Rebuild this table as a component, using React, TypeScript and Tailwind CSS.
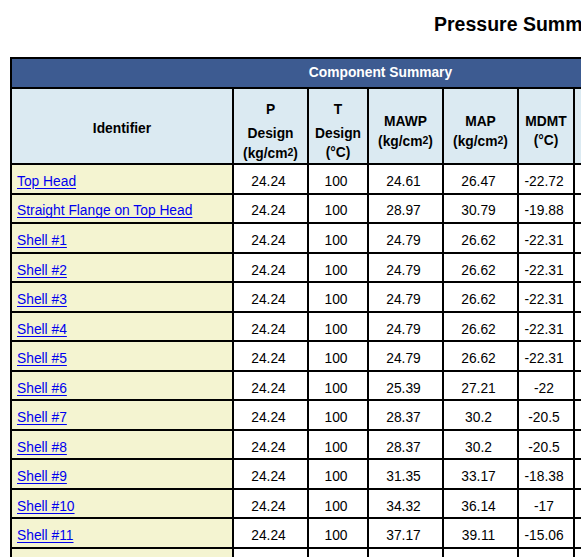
const rows = [
  ["Top Head", "24.24", "100", "24.61", "26.47", "-22.72"],
  ["Straight Flange on Top Head", "24.24", "100", "28.97", "30.79", "-19.88"],
  ["Shell #1", "24.24", "100", "24.79", "26.62", "-22.31"],
  ["Shell #2", "24.24", "100", "24.79", "26.62", "-22.31"],
  ["Shell #3", "24.24", "100", "24.79", "26.62", "-22.31"],
  ["Shell #4", "24.24", "100", "24.79", "26.62", "-22.31"],
  ["Shell #5", "24.24", "100", "24.79", "26.62", "-22.31"],
  ["Shell #6", "24.24", "100", "25.39", "27.21", "-22"],
  ["Shell #7", "24.24", "100", "28.37", "30.2", "-20.5"],
  ["Shell #8", "24.24", "100", "28.37", "30.2", "-20.5"],
  ["Shell #9", "24.24", "100", "31.35", "33.17", "-18.38"],
  ["Shell #10", "24.24", "100", "34.32", "36.14", "-17"],
  ["Shell #11", "24.24", "100", "37.17", "39.11", "-15.06"],
];

const head = "bg-[#dbeaf2] flex flex-col items-center justify-center pt-[10px] text-center font-bold leading-[19px] text-black";

function Kg() {
  return (
    <span>
      (kg/cm<span className="text-[10.5px] align-[2px]">2</span>)
    </span>
  );
}

export default function App() {
  return (
    <div className="w-full h-screen overflow-hidden bg-white font-['Liberation_Sans',Arial,sans-serif] text-[13.8px] text-black">
      <h1 className="pl-[434px] pt-[12px] text-[19.5px] leading-[24px] font-bold whitespace-nowrap">
        Pressure Summary
      </h1>

      <div className="ml-[10px] mt-[21px] w-max bg-black p-[2px] grid grid-cols-[220px_73px_58px_73px_73px_54px_86px_86px] grid-rows-[28px_74px] auto-rows-[27.54px] gap-[2px]">
        <div className="col-span-8 bg-[#3d5b91] flex items-center justify-center text-white font-bold">
          Component Summary
        </div>

        <div className={head.replace("pt-[10px]", "pt-[5px]")}>Identifier</div>
        <div className={head}>
          <span>P</span>
          <span className="mt-[5px]">Design</span>
          <Kg />
        </div>
        <div className={head}>
          <span>T</span>
          <span className="mt-[5px]">Design</span>
          <span>(°C)</span>
        </div>
        <div className={head}>
          <span>MAWP</span>
          <Kg />
        </div>
        <div className={head}>
          <span>MAP</span>
          <Kg />
        </div>
        <div className={head}>
          <span>MDMT</span>
          <span>(°C)</span>
        </div>
        <div className={head}></div>
        <div className={head}></div>

        {rows.map((r) => (
          <div key={r[0]} className="contents">
            <div className="bg-[#f4f4d1] flex items-center pl-[5px] pt-[7px]">
              <a href="#" className="text-[#0000ee] underline underline-offset-[2px]">
                {r[0]}
              </a>
            </div>
            {r.slice(1).map((v, i) => (
              <div key={i} className="bg-white flex items-center justify-center pr-[4px] pt-[7px]">
                {v}
              </div>
            ))}
            <div className="bg-white"></div>
            <div className="bg-white"></div>
          </div>
        ))}

        {/* next row, only its top edge shows */}
        <div className="bg-[#f4f4d1]"></div>
        <div className="bg-white"></div>
        <div className="bg-white"></div>
        <div className="bg-white"></div>
        <div className="bg-white"></div>
        <div className="bg-white"></div>
        <div className="bg-white"></div>
        <div className="bg-white"></div>
      </div>
    </div>
  );
}
